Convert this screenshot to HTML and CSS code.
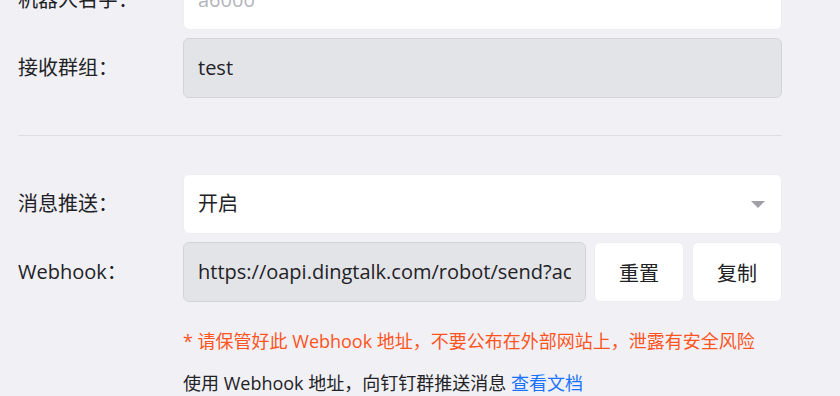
FILE: index.html
```
<!DOCTYPE html>
<html lang="zh-CN">
<head>
<meta charset="utf-8">
<link rel="stylesheet" href="styles.css">
</head>
<body>
<div class="form">
  <div class="row">
    <div class="label">机器人名字：</div>
    <div class="field input input-white placeholder">a6000</div>
  </div>
  <div class="row">
    <div class="label">接收群组：</div>
    <div class="field input input-disabled">test</div>
  </div>
  <div class="divider"></div>
  <div class="row">
    <div class="label">消息推送：</div>
    <div class="field input input-white select">开启<span class="caret"></span></div>
  </div>
  <div class="row">
    <div class="label">Webhook：</div>
    <div class="field webhook">
      <div class="input input-disabled url"><span class="url-text">https://oapi.dingtalk.com/robot/send?ac</span></div>
      <button class="btn">重置</button>
      <button class="btn">复制</button>
    </div>
  </div>
  <div class="notes">
    <p class="warn">* 请保管好此 Webhook 地址，不要公布在外部网站上，泄露有安全风险</p>
    <p class="tip">使用 Webhook 地址，向钉钉群推送消息 <a class="link" href="#">查看文档</a></p>
  </div>
</div>
</body>
</html>
```
FILE: styles.css
```
html, body {
  margin: 0;
  padding: 0;
  background: #f0f0f5;
}
body {
  font-family: "Open Sans", "Noto Sans CJK SC", sans-serif;
  color: #222226;
  overflow: hidden;
}
.form {
  width: 764px;
  margin: -30px 0 0 18px;
}
.row {
  display: grid;
  grid-template-columns: 165px 599px;
  align-items: center;
  height: 60px;
  margin-bottom: 8px;
}
.label {
  font-size: 20px;
  line-height: 28px;
  color: #222226;
  white-space: nowrap;
}
.input {
  box-sizing: border-box;
  height: 60px;
  border: 1px solid #eeeef3;
  border-radius: 6px;
  padding: 0 14px;
  font-size: 20px;
  line-height: 58px;
  white-space: nowrap;
  overflow: hidden;
}
.input-white {
  background: #ffffff;
}
.input-disabled {
  background: #e3e4e8;
  border-color: #d3d4d9;
}
.placeholder {
  color: #b3b3bb;
}
.select {
  display: flex;
  justify-content: space-between;
  align-items: center;
  padding-right: 16px;
}
.caret {
  width: 0;
  height: 0;
  border-left: 7px solid transparent;
  border-right: 7px solid transparent;
  border-top: 7px solid #a0a0a6;
}
.divider {
  height: 1px;
  background: #dedee4;
  margin: 37px 0 38px;
}
.webhook {
  display: flex;
  gap: 8px;
}
.url {
  width: 403px;
  flex: none;
}
.url-text {
  display: block;
  overflow: hidden;
  white-space: nowrap;
}
.btn {
  box-sizing: border-box;
  width: 90px;
  height: 60px;
  flex: none;
  background: #ffffff;
  border: 1px solid #eeeef3;
  border-radius: 6px;
  font-family: "Open Sans", "Noto Sans CJK SC", sans-serif;
  font-size: 20px;
  color: #222226;
  padding: 0;
}
.notes {
  margin-left: 165px;
  padding-top: 18px;
}
.notes p {
  margin: 0;
  font-size: 18px;
  line-height: 27px;
  white-space: nowrap;
}
.warn {
  color: #ff541d;
}
.tip {
  margin-top: 15px !important;
  color: #222226;
}
.link {
  color: #1a73ff;
  text-decoration: none;
}
```
